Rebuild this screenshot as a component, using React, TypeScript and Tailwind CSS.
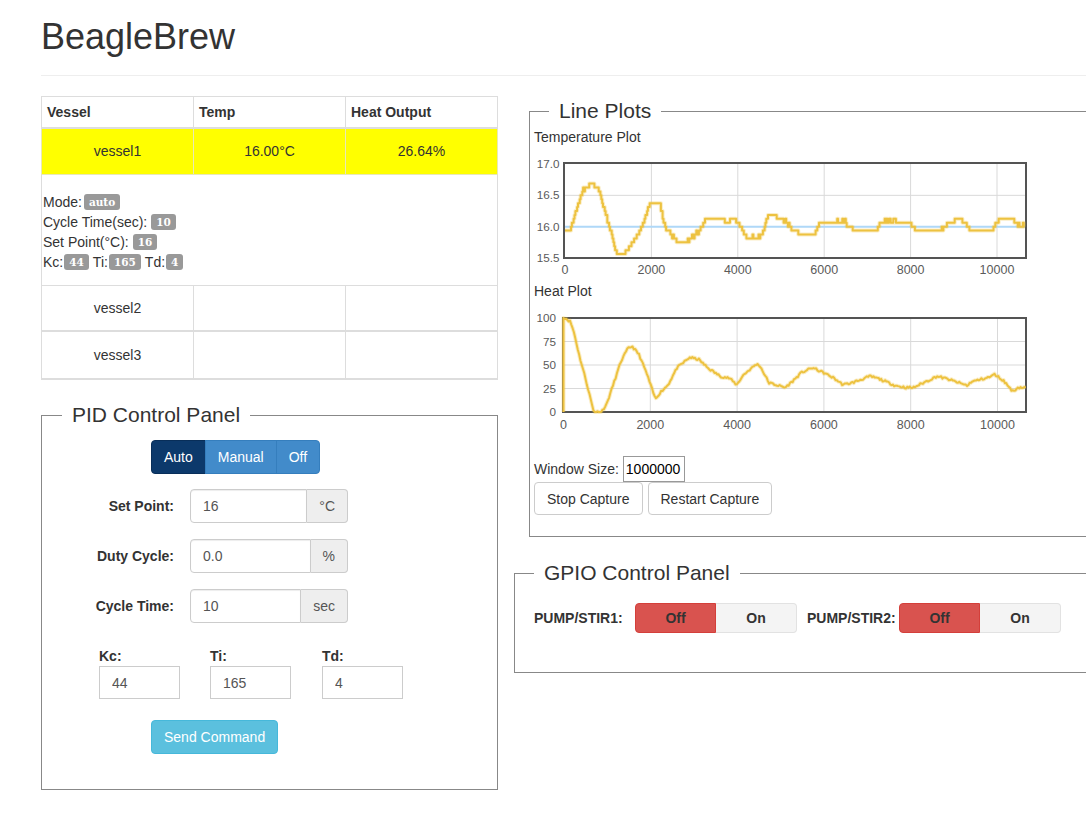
import React from 'react';

type Pt = [number, number];

// small deterministic random so the plots look the same every time
function makeRng(seed: number) {
  let s = seed;
  return () => {
    s = (s * 16807) % 2147483647;
    return (s - 1) / 2147483646;
  };
}

function lerp(keys: Pt[], x: number) {
  for (let i = 1; i < keys.length; i++) {
    if (x <= keys[i][0]) {
      const [x0, y0] = keys[i - 1];
      const [x1, y1] = keys[i];
      const t = (x - x0) / (x1 - x0 || 1);
      return y0 + (y1 - y0) * t;
    }
  }
  return keys[keys.length - 1][1];
}

const tempKeys: Pt[] = [
  [0, 15.94], [110, 15.94], [420, 16.6], [520, 16.64], [650, 16.68], [770, 16.6], [1040, 15.95],
  [1200, 15.56], [1350, 15.56], [1430, 15.62], [1500, 15.69], [1740, 15.95], [1930, 16.3],
  [2045, 16.4], [2100, 16.4], [2200, 16.34], [2280, 16.07], [2350, 15.95], [2580, 15.78],
  [2660, 15.75], [2820, 15.76], [2970, 15.84], [3125, 15.95], [3200, 16.05], [3280, 16.12],
  [3660, 16.12], [3740, 16.06], [3860, 16.12], [3950, 16.1], [4130, 15.9], [4210, 15.82],
  [4510, 15.84], [4590, 15.93], [4710, 16.19], [4860, 16.19], [4900, 16.125], [5050, 16.12],
  [5130, 16.06], [5250, 15.95], [5360, 15.91], [5480, 15.85], [5600, 15.875], [5750, 15.88],
  [5900, 16.06], [6480, 16.08], [6600, 15.98], [6730, 15.94], [7190, 15.94], [7310, 16.06],
  [7480, 16.09], [7680, 16.09], [7990, 16.06], [8100, 15.94], [8690, 15.94], [8900, 16.06],
  [9070, 16.1], [9280, 16.06], [9360, 15.94], [9900, 15.94], [9990, 16.06], [10070, 16.12],
  [10370, 16.12], [10440, 16.06], [10520, 16.0], [10600, 16.06], [10650, 16.0],
];

const heatKeys: Pt[] = [
  [0, 100], [40, 100], [160, 96], [240, 85], [370, 59], [495, 38], [700, 0], [870, 0], [990, 8],
  [1160, 31], [1325, 54], [1490, 68], [1580, 70], [1740, 61], [1910, 42], [2117, 14], [2253, 22],
  [2410, 29], [2615, 47], [2908, 58], [3115, 56], [3322, 47], [3615, 38], [3822, 36], [3988, 29],
  [4155, 40], [4447, 51], [4528, 49], [4735, 31], [5110, 26], [5237, 31], [5486, 42], [5735, 47],
  [5984, 42], [6233, 36], [6440, 29], [6648, 31], [7062, 38], [7233, 36], [7650, 28], [7892, 26],
  [8065, 26], [8606, 38], [8855, 35], [9311, 28], [9389, 32], [9811, 37], [9935, 40], [10145, 33],
  [10352, 22], [10472, 26], [10642, 26],
];

function tempPath() {
  const rnd = makeRng(7);
  const px = (t: number) => 31 + t * 0.0432;
  const py = (v: number) => 18 + ((17 - v) / 1.5) * 94;
  let d = '';
  let prev = 0;
  for (let t = 0; t <= 10650; t += 20) {
    const raw = lerp(tempKeys, t) + (rnd() - 0.5) * 0.05;
    const q = Math.round(raw * 16) / 16;
    if (t === 0) d += `M${px(t).toFixed(1)},${py(q).toFixed(1)}`;
    else d += `L${px(t).toFixed(1)},${py(prev).toFixed(1)}L${px(t).toFixed(1)},${py(q).toFixed(1)}`;
    prev = q;
  }
  return d;
}

function heatPath() {
  const rnd = makeRng(11);
  const px = (t: number) => 29.5 + t * 0.0434;
  const py = (v: number) => 18 + (100 - v) * 0.94;
  let d = `M${px(0)},${py(0)}L${px(0)},${py(100)}`;
  for (let t = 30; t <= 10650; t += 30) {
    let v = lerp(heatKeys, t) + (rnd() - 0.5) * 2.4;
    v = Math.max(0, Math.min(100, v));
    d += `L${px(t).toFixed(1)},${py(v).toFixed(1)}`;
  }
  return d;
}

const tickFont = 'Liberation Sans, Arial, sans-serif';
const tickColor = '#5a5a5a';

const TempChart: React.FC = () => {
  const px = (t: number) => 31 + t * 0.0432;
  const py = (v: number) => 18 + ((17 - v) / 1.5) * 94;
  const d = tempPath();
  return (
    <svg width={520} height={136} className="block">
      {[2000, 4000, 6000, 8000, 10000].map((t) => (
        <line key={t} x1={px(t)} x2={px(t)} y1={17} y2={113} stroke="#d9d9d9" strokeWidth={1} />
      ))}
      {[16.5, 16.0].map((v) => (
        <line key={v} x1={29} x2={493} y1={py(v)} y2={py(v)} stroke="#d9d9d9" strokeWidth={1} />
      ))}
      <rect x={30} y={17} width={462} height={95} fill="none" stroke="#545454" strokeWidth={2} />
      <line x1={31} x2={491} y1={py(16)} y2={py(16)} stroke="#afd8f8" strokeWidth={2} />
      <path d={d} fill="none" stroke="#edc240" strokeOpacity={0.3} strokeWidth={4} strokeLinejoin="round" />
      <path d={d} fill="none" stroke="#edc240" strokeWidth={2} strokeLinejoin="round" />
      {[17.0, 16.5, 16.0, 15.5].map((v) => (
        <text key={v} x={25.5} y={py(v) + 4} textAnchor="end" fontSize={11.7} fill={tickColor} fontFamily={tickFont}>
          {v.toFixed(1)}
        </text>
      ))}
      {[0, 2000, 4000, 6000, 8000, 10000].map((t) => (
        <text key={t} x={px(t)} y={128} textAnchor="middle" fontSize={12.5} fill={tickColor} fontFamily={tickFont}>
          {t}
        </text>
      ))}
    </svg>
  );
};

const HeatChart: React.FC = () => {
  const px = (t: number) => 29.5 + t * 0.0434;
  const py = (v: number) => 18 + (100 - v) * 0.94;
  const d = heatPath();
  return (
    <svg width={520} height={136} className="block">
      {[2000, 4000, 6000, 8000, 10000].map((t) => (
        <line key={t} x1={px(t)} x2={px(t)} y1={18} y2={113} stroke="#d9d9d9" strokeWidth={1} />
      ))}
      {[75, 50, 25].map((v) => (
        <line key={v} x1={28} x2={493} y1={py(v)} y2={py(v)} stroke="#d9d9d9" strokeWidth={1} />
      ))}
      <rect x={29} y={18} width={463} height={94} fill="none" stroke="#545454" strokeWidth={2} />
      <path d={d} fill="none" stroke="#edc240" strokeOpacity={0.3} strokeWidth={4} strokeLinejoin="round" />
      <path d={d} fill="none" stroke="#edc240" strokeWidth={2} strokeLinejoin="round" />
      {[100, 75, 50, 25, 0].map((v) => (
        <text key={v} x={22} y={py(v) + 4} textAnchor="end" fontSize={11.7} fill={tickColor} fontFamily={tickFont}>
          {v}
        </text>
      ))}
      {[0, 2000, 4000, 6000, 8000, 10000].map((t) => (
        <text key={t} x={px(t)} y={129} textAnchor="middle" fontSize={12.5} fill={tickColor} fontFamily={tickFont}>
          {t}
        </text>
      ))}
    </svg>
  );
};

const Badge: React.FC<{ children: React.ReactNode; className?: string }> = ({ children, className = '' }) => (
  <span
    className={`inline-block rounded-[3px] bg-[#999] px-[5px] py-[2px] font-['DejaVu_Serif',serif] text-[10.5px] leading-[12px] font-bold text-white ${className}`}
  >
    {children}
  </span>
);

const VesselTable: React.FC = () => (
  <table className="w-[457px] table-fixed border-collapse border border-[#ddd]">
    <thead>
      <tr>
        <th className="border border-b-2 border-[#ddd] px-[5px] py-[5px] text-left font-bold">Vessel</th>
        <th className="border border-b-2 border-[#ddd] px-[5px] py-[5px] text-left font-bold">Temp</th>
        <th className="border border-b-2 border-[#ddd] px-[5px] py-[5px] text-left font-bold">Heat Output</th>
      </tr>
    </thead>
    <tbody>
      <tr className="bg-[#ffff00]">
        <td className="h-[46px] border border-[#e8e8b8] text-center">vessel1</td>
        <td className="h-[46px] border border-[#e8e8b8] text-center">16.00°C</td>
        <td className="h-[46px] border border-[#e8e8b8] text-center">26.64%</td>
      </tr>
      <tr>
        <td colSpan={3} className="border border-[#ddd] px-0 pt-[17px] pb-[13px] pl-px">
          <div className="flex h-[20px] items-center">
            <span>Mode:</span>
            <Badge className="ml-[2px]">auto</Badge>
          </div>
          <div className="flex h-[20px] items-center">
            <span>Cycle Time(sec):</span>
            <Badge className="ml-[4px]">10</Badge>
          </div>
          <div className="flex h-[20px] items-center">
            <span>Set Point(°C):</span>
            <Badge className="ml-[4px]">16</Badge>
          </div>
          <div className="flex h-[20px] items-center">
            <span>Kc:</span>
            <Badge className="ml-[1px]">44</Badge>
            <span className="ml-[4px]">Ti:</span>
            <Badge className="ml-[1px]">165</Badge>
            <span className="ml-[4px]">Td:</span>
            <Badge className="ml-[1px]">4</Badge>
          </div>
        </td>
      </tr>
      <tr>
        <td className="h-[46px] border border-[#ddd] text-center">vessel2</td>
        <td className="h-[46px] border border-[#ddd]"></td>
        <td className="h-[46px] border border-[#ddd]"></td>
      </tr>
    </tbody>
    <tbody>
      <tr>
        <td className="h-[48px] border border-t-2 border-b-2 border-[#ddd] text-center">vessel3</td>
        <td className="h-[48px] border border-t-2 border-b-2 border-[#ddd]"></td>
        <td className="h-[48px] border border-t-2 border-b-2 border-[#ddd]"></td>
      </tr>
    </tbody>
  </table>
);

const InputRow: React.FC<{ label: string; value: string; unit: string; className?: string }> = ({ label, value, unit, className = '' }) => (
  <div className={`flex items-center ${className}`}>
    <label className="w-[112px] text-right font-bold">{label}</label>
    <div className="ml-[16px] flex h-[34px] w-[158px]">
      <input
        defaultValue={value}
        className="min-w-0 flex-1 rounded-l-[4px] border border-[#ccc] px-[12px] text-[#555] shadow-[inset_0_1px_1px_rgba(0,0,0,0.075)] outline-none"
      />
      <span className="flex items-center rounded-r-[4px] border border-l-0 border-[#ccc] bg-[#eee] px-[12px] text-[#555]">{unit}</span>
    </div>
  </div>
);

const SmallInput: React.FC<{ label: string; value: string; className?: string }> = ({ label, value, className = '' }) => (
  <div className={className}>
    <div className="font-bold">{label}</div>
    <input defaultValue={value} className="h-[33px] w-[81px] border border-[#ccc] px-[12px] text-[#555] outline-none" />
  </div>
);

const PidPanel: React.FC = () => (
  <fieldset className="mt-[20px] border border-[#888] px-[20px] pb-[35px]">
    <legend className="px-[10px] text-[21px] leading-[30px] text-[#333]">PID Control Panel</legend>
    <div className="mt-[10px] ml-[89px] flex w-fit">
      <button className="h-[34px] rounded-l-[4px] border border-[#082e59] bg-[#0c396b] px-[12px] text-white">Auto</button>
      <button className="-ml-px h-[34px] border border-[#357ebd] bg-[#428bca] px-[12px] text-white">Manual</button>
      <button className="-ml-px h-[34px] rounded-r-[4px] border border-[#357ebd] bg-[#428bca] px-[12px] text-white">Off</button>
    </div>
    <InputRow className="mt-[15px]" label="Set Point:" value="16" unit="°C" />
    <InputRow className="mt-[16px]" label="Duty Cycle:" value="0.0" unit="%" />
    <InputRow className="mt-[16px]" label="Cycle Time:" value="10" unit="sec" />
    <div className="mt-[23px] ml-[37px] flex">
      <SmallInput className="w-[111px]" label="Kc:" value="44" />
      <SmallInput className="w-[112px]" label="Ti:" value="165" />
      <SmallInput label="Td:" value="4" />
    </div>
    <button className="mt-[21px] ml-[89px] h-[34px] rounded-[4px] border border-[#46b8da] bg-[#5bc0de] px-[12px] text-white">
      Send Command
    </button>
  </fieldset>
);

const LinePlots: React.FC = () => (
  <fieldset className="ml-[15px] w-[620px] border border-[#888] pl-[4px] pb-[21px]">
    <legend className="ml-[15px] px-[10px] text-[21px] leading-[30px] text-[#333]">Line Plots</legend>
    <div className="pt-[2px] text-[14px] leading-[18px]">Temperature Plot</div>
    <TempChart />
    <div className="text-[14px] leading-[18px]">Heat Plot</div>
    <HeatChart />
    <div className="mt-[20px] flex h-[26px] items-center">
      <span>Window Size:</span>
      <input defaultValue="1000000" className="ml-[4px] h-[26px] w-[62px] border border-[#999] px-[2px] text-black outline-none" />
    </div>
    <div className="flex gap-[5px]">
      <button className="h-[33px] rounded-[4px] border border-[#ccc] bg-white px-[12px] text-[#333]">Stop Capture</button>
      <button className="h-[33px] rounded-[4px] border border-[#ccc] bg-white px-[12px] text-[#333]">Restart Capture</button>
    </div>
  </fieldset>
);

const Toggle: React.FC = () => (
  <div className="flex h-[30px] w-[162px]">
    <button className="w-[81px] rounded-l-[4px] border border-[#d43f3a] bg-[#d9534f] font-bold text-[#333]">Off</button>
    <button className="w-[81px] rounded-r-[4px] border border-l-0 border-[#e2e2e2] bg-[#f4f4f4] font-bold text-[#333]">On</button>
  </div>
);

const GpioPanel: React.FC = () => (
  <fieldset className="mt-[21px] w-[640px] border border-[#888] pl-[19px] pb-[39px]">
    <legend className="px-[10px] text-[21px] leading-[30px] text-[#333]">GPIO Control Panel</legend>
    <div className="mt-[15px] flex items-center">
      <span className="w-[101px] font-bold">PUMP/STIR1:</span>
      <Toggle />
      <span className="ml-[10px] w-[92px] font-bold">PUMP/STIR2:</span>
      <Toggle />
    </div>
  </fieldset>
);

export default function App() {
  return (
    <div className="min-h-[822px] w-full overflow-hidden bg-white font-['Liberation_Sans',Arial,sans-serif] text-[14px] leading-[20px] text-[#333]">
      <div className="pl-[41px]">
        <h1 className="pt-[17px] text-[36px] leading-[40px] font-normal">BeagleBrew</h1>
        <hr className="mt-[18px] w-[1100px] border-t border-[#eee]" />
        <div className="mt-[20px] flex items-start">
          <div className="w-[457px] shrink-0">
            <VesselTable />
            <PidPanel />
          </div>
          <div className="ml-[16px] w-[660px] shrink-0">
            <LinePlots />
            <GpioPanel />
          </div>
        </div>
      </div>
    </div>
  );
}
